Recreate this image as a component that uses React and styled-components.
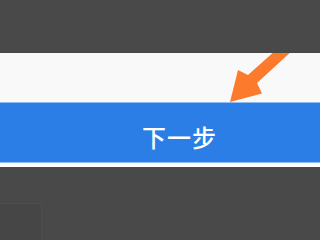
import React from "react";
import styled, { createGlobalStyle } from "styled-components";

const Global = createGlobalStyle`
  html, body { margin: 0; padding: 0; background: #494949; }
  body { width: 320px; height: 240px; overflow: hidden; font-family: "Noto Sans CJK SC", "Noto Sans", sans-serif; }
`;

const Page = styled.div`
  display: flex;
  flex-direction: column;
  width: 320px;
  height: 240px;
  background: #494949;
`;

const TopShade = styled.div`
  height: 53px;
  flex: none;
  background: #494949;
`;

const LightBand = styled.div`
  position: relative;
  height: 49px;
  flex: none;
  background: #f9f9f9;
  overflow: hidden;
`;

const Arrow = styled.svg`
  position: absolute;
  left: 0;
  top: 0;
  width: 320px;
  height: 49px;
`;

const NextButton = styled.div`
  height: 61px;
  flex: none;
  display: flex;
  align-items: center;
  justify-content: center;
  padding: 8px 0 0 39px;
  box-sizing: border-box;
  background: #2a7ee6;
  border-top: 1px solid #8fbdf2;
  border-bottom: 1px solid #8fbdf2;
  color: #ffffff;
  font-size: 24px;
  font-weight: 500;
  letter-spacing: 1px;
  line-height: 1;
`;

const WhiteLine = styled.div`
  height: 4px;
  flex: none;
  background: #ffffff;
`;

const Bottom = styled.div`
  flex: 1;
  display: flex;
  align-items: flex-end;
`;

const CornerTile = styled.div`
  width: 42px;
  height: 37px;
  background: #464646;
  border-top: 1px solid #4e4e4e;
  border-right: 1px solid #4e4e4e;
  box-sizing: border-box;
`;

export default function App() {
  return (
    <>
      <Global />
      <Page>
        <TopShade />
        <LightBand>
          <Arrow viewBox="0 0 320 49">
            <polygon
              points="230,49 238,17 248,22 276,-3 293,-3 257,30 262,40.5"
              fill="#fb7a2b"
            />
          </Arrow>
        </LightBand>
        <NextButton>下一步</NextButton>
        <WhiteLine />
        <Bottom>
          <CornerTile />
        </Bottom>
      </Page>
    </>
  );
}
